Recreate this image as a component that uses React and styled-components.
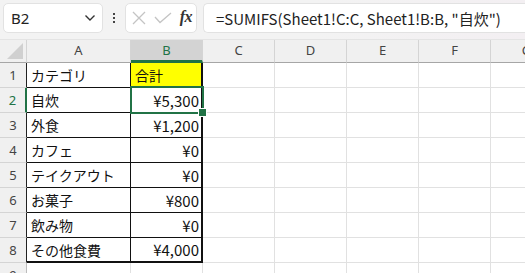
import React from "react";
import styled, { createGlobalStyle } from "styled-components";

const Global = createGlobalStyle`
  html, body { margin: 0; padding: 0; background: #ffffff; }
  body { width: 525px; height: 273px; overflow: hidden; font-family: "Noto Sans", "Liberation Sans", sans-serif; }
  * { box-sizing: border-box; }
`;

const GREEN = "#217346";

const Page = styled.div`
  width: 525px;
  height: 273px;
  overflow: hidden;
  display: flex;
  flex-direction: column;
  background: #fff;
`;

const Toolbar = styled.div`
  height: 40px;
  flex: none;
  display: flex;
  align-items: flex-start;
  padding: 3px 0 0 3px;
  background: linear-gradient(90deg, #f3f3f3 0%, #f3f3f3 60%, #f3eff2 100%);
  border-bottom: 1px solid #e4e4e4;
`;

const Box = styled.div`
  height: 30px;
  background: #fff;
  border: 1px solid #e2e2e2;
  border-radius: 5px;
  display: flex;
  align-items: center;
`;

const NameBox = styled(Box)`
  width: 100px;
  padding: 0 6px 0 7px;
  justify-content: space-between;
  font-family: "Noto Sans", "Liberation Sans", sans-serif;
  font-size: 15px;
  color: #222;
`;

const Dots = styled.div`
  width: 22px;
  height: 30px;
  display: flex;
  flex-direction: column;
  align-items: center;
  justify-content: center;
  gap: 2px;
  & > i {
    display: block;
    width: 2px;
    height: 2px;
    background: #444;
  }
`;

const FxBox = styled(Box)`
  width: 72px;
  padding: 0 4px 0 6px;
  justify-content: space-between;
`;

const Fx = styled.span`
  font-family: "Liberation Serif", "DejaVu Serif", serif;
  font-style: italic;
  font-weight: bold;
  font-size: 16px;
  color: #333;
  letter-spacing: -0.5px;
  margin-top: -2px;
`;

const FormulaBox = styled(Box)`
  flex: 1;
  margin-left: 6px;
  padding-left: 12px;
  border-right: none;
  border-radius: 5px 0 0 5px;
  font-family: "Noto Sans CJK JP", "Noto Sans", sans-serif;
  font-size: 15px;
  color: #222;
  white-space: nowrap;
`;

const Sheet = styled.div`
  flex: 1;
  display: grid;
  grid-template-columns: 27px 104px 72px 72px 72px 72px 72px 72px;
  grid-template-rows: 23px repeat(9, 25px);
  overflow: hidden;
`;

const Corner = styled.div`
  position: relative;
  background: #f0f0f0;
  border-right: 1px solid #d4d4d4;
  border-bottom: 1px solid #a6a6a6;
  &::after {
    content: "";
    position: absolute;
    right: 3px;
    bottom: 3px;
    width: 0;
    height: 0;
    border-style: solid;
    border-width: 0 0 16px 16px;
    border-color: transparent transparent #d0d0d0 transparent;
  }
`;

const ColHeader = styled.div`
  background: ${(p) => (p.$sel ? "#d3d3d3" : "#f0f0f0")};
  border-right: 1px solid #d4d4d4;
  border-bottom: ${(p) => (p.$sel ? `3px solid ${GREEN}` : "1px solid #a6a6a6")};
  color: ${(p) => (p.$sel ? GREEN : "#444")};
  font-family: "Noto Sans", "Liberation Sans", sans-serif;
  font-size: 13px;
  display: flex;
  justify-content: center;
  align-items: flex-start;
  padding-top: 2px;
  line-height: 16px;
`;

const RowHeader = styled.div`
  background: #f0f0f0;
  border-bottom: 1px solid #d4d4d4;
  border-right: ${(p) => (p.$sel ? `2px solid ${GREEN}` : p.$dark ? "1px solid #222" : "1px solid #bcbcbc")};
  color: ${(p) => (p.$sel ? GREEN : "#444")};
  font-family: "Noto Sans", "Liberation Sans", sans-serif;
  font-size: 13px;
  display: flex;
  justify-content: center;
  align-items: center;
`;

const Cell = styled.div`
  position: relative;
  background: ${(p) => p.$bg || "#fff"};
  border-right: ${(p) => p.$right || "1px solid #e1e1e1"};
  border-bottom: ${(p) => p.$bottom || "1px solid #e1e1e1"};
  font-family: "Noto Sans CJK JP", "Noto Sans", sans-serif;
  font-size: ${(p) => (p.$num ? "15px" : "14px")};
  color: #111;
  display: flex;
  align-items: center;
  justify-content: ${(p) => (p.$num ? "flex-end" : "flex-start")};
  padding: 0 ${(p) => (p.$num ? "2px" : "0")} 0 ${(p) => (p.$num ? "0" : "4px")};
  white-space: nowrap;
`;

const Selection = styled.div`
  position: absolute;
  z-index: 3;
  left: -1px;
  top: -2px;
  right: -3px;
  bottom: -2px;
  border: 2px solid ${GREEN};
  pointer-events: none;
  &::after {
    content: "";
    position: absolute;
    right: -5px;
    bottom: -5px;
    width: 7px;
    height: 7px;
    background: ${GREEN};
    border: 1px solid #fff;
  }
`;

const cols = ["A", "B", "C", "D", "E", "F", "G"];
const data = [
  ["カテゴリ", "合計"],
  ["自炊", "¥5,300"],
  ["外食", "¥1,200"],
  ["カフェ", "¥0"],
  ["テイクアウト", "¥0"],
  ["お菓子", "¥800"],
  ["飲み物", "¥0"],
  ["その他食費", "¥4,000"],
];

const Chevron = () => (
  <svg width="12" height="8" viewBox="0 0 12 8">
    <path d="M1.5 1.5 L6 6 L10.5 1.5" fill="none" stroke="#333" strokeWidth="1.4" />
  </svg>
);

const Cross = () => (
  <svg width="14" height="14" viewBox="0 0 14 14">
    <path d="M1 1 L13 13 M13 1 L1 13" stroke="#c4c4c4" strokeWidth="1.3" />
  </svg>
);

const Check = () => (
  <svg width="18" height="12" viewBox="0 0 18 12">
    <path d="M1 5 L6 10.5 L17 1" fill="none" stroke="#c4c4c4" strokeWidth="1.3" />
  </svg>
);

export default function App() {
  const rows = [];
  for (let r = 0; r < 9; r++) {
    const inTable = r < 8;
    const sel = r === 1;
    rows.push(
      <RowHeader key={`h${r}`} $sel={sel} $dark={inTable}>
        {r + 1}
      </RowHeader>
    );
    cols.forEach((c, ci) => {
      if (inTable && ci === 0) {
        rows.push(
          <Cell
            key={`${c}${r}`}
            $right="1px solid #111"
            $bottom={r === 7 ? "2px solid #111" : "1px solid #111"}
          >
            {data[r][0]}
          </Cell>
        );
      } else if (inTable && ci === 1) {
        rows.push(
          <Cell
            key={`${c}${r}`}
            $num={r > 0}
            $bg={r === 0 ? "#ffff00" : undefined}
            $right="2px solid #111"
            $bottom={r === 7 ? "2px solid #111" : "1px solid #111"}
          >
            {data[r][1]}
            {sel && <Selection />}
          </Cell>
        );
      } else {
        rows.push(<Cell key={`${c}${r}`} />);
      }
    });
  }

  return (
    <Page>
      <Global />
      <Toolbar>
        <NameBox>
          <span>B2</span>
          <Chevron />
        </NameBox>
        <Dots>
          <i />
          <i />
          <i />
        </Dots>
        <FxBox>
          <Cross />
          <Check />
          <Fx>fx</Fx>
        </FxBox>
        <FormulaBox>=SUMIFS(Sheet1!C:C, Sheet1!B:B, "自炊")</FormulaBox>
      </Toolbar>
      <Sheet>
        <Corner />
        {cols.map((c) => (
          <ColHeader key={c} $sel={c === "B"}>
            {c}
          </ColHeader>
        ))}
        {rows}
      </Sheet>
    </Page>
  );
}
